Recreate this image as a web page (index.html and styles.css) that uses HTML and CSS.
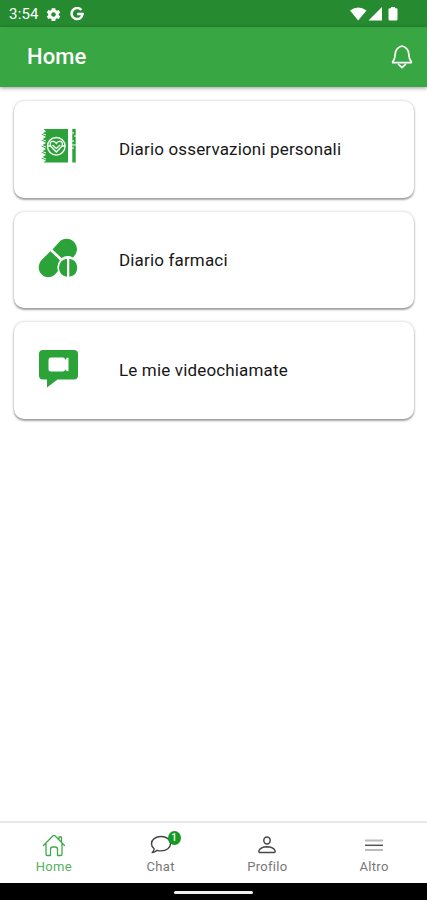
FILE: index.html
```html
<!DOCTYPE html>
<html lang="it">
<head>
<meta charset="utf-8">
<meta name="viewport" content="width=device-width, initial-scale=1">
<title>Home</title>
<link rel="stylesheet" href="styles.css">
</head>
<body>
<div class="app">
  <div class="status">
    <span class="time">3:54</span>
    <svg class="gear" width="17" height="17" viewBox="0 0 24 24"><path fill="#fff" fill-rule="evenodd" d="M19.400 13a7.500 7.500 0 0 0 0-2l2.100-1.700-2.200-3.700-2.600 1a7 7 0 0 0-1.700-1L14.600 3H9.400L9 5.600a7 7 0 0 0-1.700 1l-2.600-1-2.200 3.700L4.600 11a7.500 7.500 0 0 0 0 2l-2.100 1.700 2.200 3.700 2.600-1a7 7 0 0 0 1.700 1l.4 2.600h5.200l.4-2.600a7 7 0 0 0 1.700-1l2.600 1 2.200-3.700zM12 15.300a3.300 3.300 0 1 1 0-6.600 3.300 3.300 0 0 1 0 6.600z"/></svg>
    <svg class="google" width="14" height="14" viewBox="0 0 14 14"><path fill="none" stroke="#fff" stroke-width="2.500" d="M11.300 3A5.500 5.500 0 1 0 12.600 7H7.200"/></svg>
    <span class="spacer"></span>
    <svg width="50" height="16" viewBox="0 0 50 16"><g fill="#fff"><path d="M0 4.500Q8.200-1.600 16.500 4.500L8.200 14.500z"/><path d="M32 1v13.500H18.500z"/><path d="M39.700 2.200h1.300V1h4v1.200h1.300q1.200 0 1.200 1.100v10q0 1.300-1.300 1.300h-6.400q-1.300 0-1.300-1.300v-10q0-1.100 1.200-1.100z"/></g></svg>
  </div>
  <header class="bar">
    <h1>Home</h1>
    <svg width="22" height="26" viewBox="0 0 22 26" fill="none" stroke="#fff" stroke-width="1.700" stroke-linejoin="round" stroke-linecap="round"><path d="M11 2C6.700 3.200 4.600 6 4.300 9.500 4 13.500 3.900 15 1.900 17.300q-.8 1.400.5 1.400h17.200q1.300 0 .5-1.400C18.100 15 18 13.500 17.700 9.500 17.400 6 15.300 3.200 11 2z"/><path d="M7.500 20.300l3.500 3.400 3.500-3.400"/></svg>
  </header>
  <main class="cards">
    <a class="card">
      <svg width="40" height="40" viewBox="0 0 40 40"><path fill="#2ba339" d="M5.500 2H30v33.500H5.500l2.500-2-5-2.500 5-3-5-3 5-3-5-3 5-3-5-3 5-3-5-3 5-2.500zM34.300 2h3.400v33.500h-3.400z"/><g fill="none" stroke="#fff"><path stroke-width="1" d="M3 6l5 2M3 12l5 2M3 18l5 2M3 24l5 2M3 30l5 2M34 6h2M36 9h2M34 14h2M34 18h4M35 20v2"/><circle cx="18.300" cy="19.300" r="8.800" stroke-width="1.300"/><path stroke-width="1.300" d="M9.500 19h3l5.800 6 5.800-6h3M12.500 19q-1.300-5 2.800-4.600 2 .2 3 2 1-1.800 3-2 4.100-.4 2.800 4.600"/><path stroke-width="1.200" d="M14.500 18l3.800 3.500 3.800-3.500"/></g></svg>
      <span>Diario osservazioni personali</span>
    </a>
    <a class="card">
      <svg width="40" height="40" viewBox="0 0 40 40"><g fill="#2ba339"><path d="M14.500 11.500L21 4.200C25.500-.5 32 0 36 4c4 4.500 3.500 10 1 13l-2 2.500Q29 16.500 23.500 20z"/><path d="M12.500 13.300L22 22.200Q18 26.500 20 33L17.500 36C13 40.500 7 40 3.500 36.300-.5 32 0 26 4 21.500z"/><path d="M29 20.800v18q-7.800-1-8-9 .2-8 8-9zM31.300 20.800v18q7.700-1 7.900-9-.2-8-7.900-9z"/></g></svg>
      <span>Diario farmaci</span>
    </a>
    <a class="card">
      <svg width="40" height="40" viewBox="0 0 40 40"><path fill="#2ba339" d="M5 1h31q4 0 4 4v21.500q0 4-4 4H19.500L9 38.500v-8H5q-4 0-4-4V5q0-4 4-4z"/><path fill="#fff" d="M12.500 8.500H25q2 0 2 2v.5l2-2.200h1.500v13.400H29L27 20.500q0 2-2 2H13q-2.500 0-2.500-2.500v-9q0-2.500 2-2.500z"/></svg>
      <span>Le mie videochiamate</span>
    </a>
  </main>
  <nav class="tabs">
    <a class="tab active">
      <svg width="24" height="24" viewBox="0 0 24 24" fill="none" stroke="#41a94b" stroke-width="1.300" stroke-linecap="round" stroke-linejoin="round"><path d="M1.500 12.500L10.800 3q1.200-1.200 2.400 0l9.300 9.500M17 6.500V4h2.500v5M4 11v10.300q0 1.200 1.200 1.200h3.300v-6q0-2.500 2-2.500h3q2 0 2 2.500v6h3.300q1.200 0 1.200-1.200V11"/></svg>
      <span>Home</span>
    </a>
    <a class="tab">
      <span class="chat"><svg width="24" height="24" viewBox="0 0 24 24" fill="none" stroke="#444" stroke-width="1.400" stroke-linejoin="round"><path d="M12 3.500C6.300 3.500 2.500 6.700 2.500 10.700q0 3 2.700 5.100-.2 2.200-2 3.700 2.800 0 4.800-2.200 1.900.6 4 .6c5.700 0 9.500-3.200 9.500-7.200S17.700 3.500 12 3.500z"/></svg><b class="badge">1</b></span>
      <span>Chat</span>
    </a>
    <a class="tab">
      <svg width="24" height="24" viewBox="0 0 24 24" fill="none" stroke="#484848" stroke-width="1.500"><ellipse cx="12" cy="7.500" rx="3.200" ry="3.500"/><path d="M4.500 19.500q-1-.3-.5-2Q5.500 14 12 13.800q6.500.2 8 3.700.5 1.700-.5 2z"/></svg>
      <span>Profilo</span>
    </a>
    <a class="tab">
      <svg width="24" height="24" viewBox="0 0 24 24" fill="none"><path stroke="#bbb" stroke-width="2" d="M3 7.500h18M3 17h18"/><path stroke="#555" stroke-width="1.500" d="M3 12.300h18"/></svg>
      <span>Altro</span>
    </a>
  </nav>
  <div class="system"><i></i></div>
</div>
</body>
</html>
```
FILE: styles.css
```css
* { box-sizing: border-box; }
body { margin: 0; background: #fff; font-family: Roboto, "Liberation Sans", sans-serif; }
.app { height: 900px; display: flex; flex-direction: column; overflow: hidden; }
.status { height: 27px; flex: none; background: #268b30; color: #fff; display: flex; align-items: center; padding: 1px 27px 0 9px; }
.time { font-size: 15px; letter-spacing: .2px; width: 36px; white-space: nowrap; }
.google { margin-left: 8px; }
.spacer { flex: 1; }
.bar { height: 60px; flex: none; background: #38a643; color: #fff; display: flex; align-items: center; justify-content: space-between; padding: 0 14px 0 27px; box-shadow: 0 1px 4px rgba(0,0,0,.4); }
.bar h1 { margin: 0 0 2px; font-size: 22px; font-weight: 500; letter-spacing: .1px; }
.cards { flex: 1; padding: 14px 13px 0 14px; display: flex; flex-direction: column; gap: 14px; }
.card { height: 96.700px; flex: none; display: flex; align-items: center; gap: 41px; padding: 0 24px 4px; border-radius: 10px; background: #fff; box-shadow: 0 2px 2px rgba(0,0,0,.32), 0 0 3px rgba(0,0,0,.24); color: #171717; font-size: 17px; letter-spacing: .16px; }
.card span { padding-top: 3px; }
.tabs { height: 62px; flex: none; border-top: 2px solid #e8e8e8; display: grid; grid-template-columns: repeat(4, 1fr); }
.tab { display: flex; flex-direction: column; align-items: center; padding: 10px 0 0 1px; color: #777; font-size: 13px; letter-spacing: .3px; line-height: 16px; }
.tab > span:last-child { margin-top: 2px; }
.tab svg { display: block; }
.active { color: #54b25d; }
.chat { position: relative; }
.badge { position: absolute; left: 19px; top: -2px; width: 13px; height: 14px; border-radius: 50%; background: #159b24; color: #fff; font-size: 10px; line-height: 14px; font-weight: 500; letter-spacing: 0; text-align: center; }
.system { height: 17px; flex: none; background: #000; display: flex; justify-content: center; padding-top: 8px; }
.system i { width: 79px; height: 3px; border-radius: 2px; background: #eee; }
```
